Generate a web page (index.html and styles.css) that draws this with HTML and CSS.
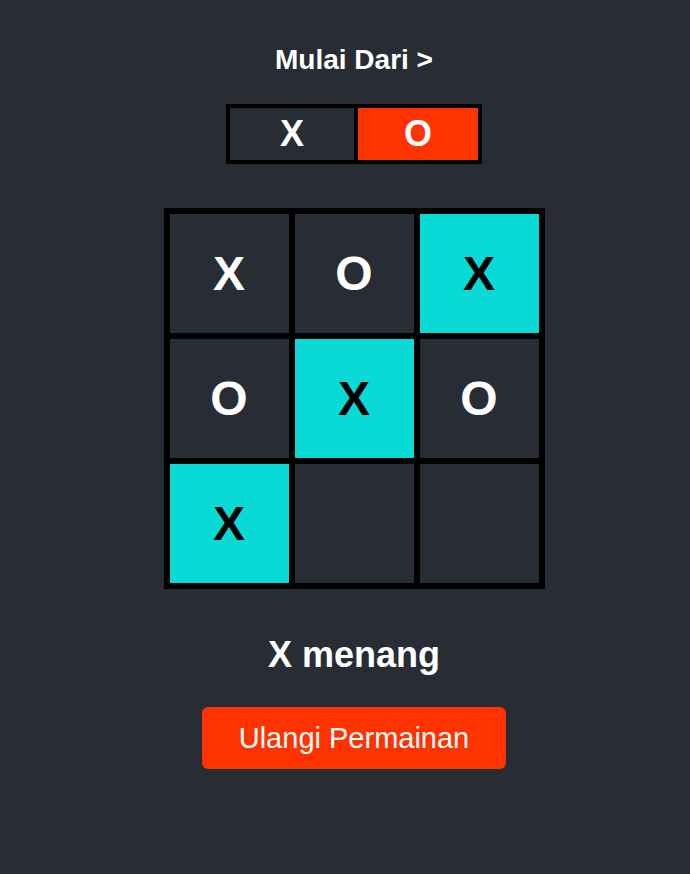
FILE: index.html
```html
<!DOCTYPE html>
<html lang="id">
<head>
<meta charset="utf-8">
<title>Tic Tac Toe</title>
<link rel="stylesheet" href="styles.css">
</head>
<body>
<main class="app">
  <div class="title">Mulai Dari &gt;</div>
  <div class="toggle">
    <span class="toggle-opt">X</span>
    <span class="toggle-opt active">O</span>
  </div>
  <div class="board">
    <div class="cell">X</div>
    <div class="cell">O</div>
    <div class="cell win">X</div>
    <div class="cell">O</div>
    <div class="cell win">X</div>
    <div class="cell">O</div>
    <div class="cell win">X</div>
    <div class="cell"></div>
    <div class="cell"></div>
  </div>
  <div class="status">X menang</div>
  <button class="reset">Ulangi Permainan</button>
</main>
</body>
</html>
```

FILE: styles.css
```css
html, body {
  margin: 0;
  padding: 0;
  background: #282c34;
  min-height: 100%;
}
body {
  font-family: "Liberation Sans", Arial, sans-serif;
  color: #ffffff;
}
.app {
  display: flex;
  flex-direction: column;
  align-items: center;
  padding: 44px 0 0 18px;
  min-height: 874px;
  box-sizing: border-box;
}
.title {
  font-size: 28px;
  font-weight: bold;
  line-height: 32px;
}
.toggle {
  display: flex;
  margin-top: 28px;
  border: 4px solid #000;
}
.toggle-opt {
  width: 124px;
  height: 52px;
  display: flex;
  align-items: center;
  justify-content: center;
  font-size: 36px;
  font-weight: bold;
  background: #282c34;
}
.toggle-opt.active {
  width: 120px;
  border-left: 4px solid #000;
  background: #ff3300;
}
.board {
  margin-top: 44px;
  display: grid;
  grid-template-columns: repeat(3, 125px);
  grid-auto-rows: 125px;
  border: 3px solid #000;
}
.cell {
  box-sizing: border-box;
  border: 3px solid #000;
  display: flex;
  align-items: center;
  justify-content: center;
  font-size: 48px;
  font-weight: bold;
  color: #fff;
}
.cell.win {
  background: #0adad6;
  color: #000;
}
.status {
  margin-top: 45px;
  font-size: 36px;
  font-weight: bold;
  line-height: 42px;
}
.reset {
  margin-top: 31px;
  width: 304px;
  height: 62px;
  border: none;
  border-radius: 6px;
  background: #ff3300;
  color: #fff;
  font-family: "Liberation Sans", Arial, sans-serif;
  font-size: 29px;
  cursor: pointer;
}
```
